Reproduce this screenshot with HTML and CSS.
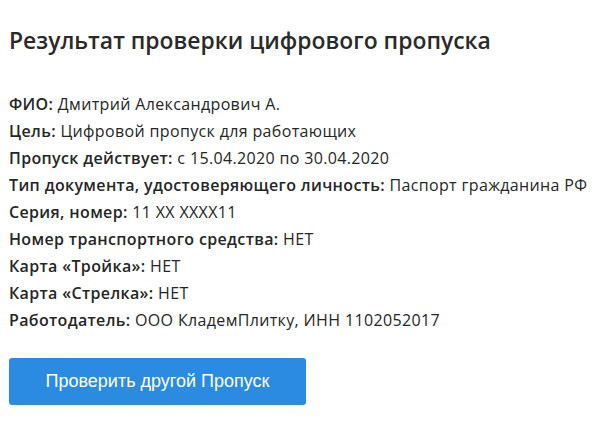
FILE: index.html
```html
<!DOCTYPE html>
<html lang="ru">
<head>
    <meta charset="UTF-8">
    <title>Результат проверки цифрового пропуска</title>
    <link rel="stylesheet" href="styles.css">
</head>
<body>
    <div class="result">
        <h2 class="title">Результат проверки цифрового пропуска</h2>

        <div class="fields">
            <p class="field"><b>ФИО:</b> Дмитрий Александрович А.</p>
            <p class="field"><b>Цель:</b> Цифровой пропуск для работающих</p>
            <p class="field"><b>Пропуск действует:</b> с 15.04.2020 по 30.04.2020</p>
            <p class="field"><b>Тип документа, удостоверяющего личность:</b> Паспорт гражданина РФ</p>
            <p class="field"><b>Серия, номер:</b> 11 XX XXXX11</p>
            <p class="field"><b>Номер транспортного средства:</b> НЕТ</p>
            <p class="field"><b>Карта «Тройка»:</b> НЕТ</p>
            <p class="field"><b>Карта «Стрелка»:</b> НЕТ</p>
            <p class="field"><b>Работодатель:</b> ООО КладемПлитку, ИНН 1102052017</p>
        </div>

        <button class="btn">Проверить другой Пропуск</button>
    </div>
</body>
</html>
```

FILE: styles.css
```css
body {
    margin: 0;
    background: #fff;
    font-family: "Open Sans", "DejaVu Sans", sans-serif;
    color: #262626;
}

.result {
    padding: 25px 9px 0 9px;
}

.title {
    margin: 0 0 34px 0;
    font-size: 22.9px;
    font-weight: 600;
    line-height: 32px;
    color: #2a2a2a;
}

.fields {
    margin-bottom: 24px;
}

.field {
    margin: 0;
    font-size: 16px;
    letter-spacing: 0.35px;
    line-height: 27px;
}

.field b {
    font-weight: 600;
}

.btn {
    display: block;
    width: 297px;
    height: 47px;
    border: none;
    border-radius: 3px;
    background: #2b8be0;
    color: #fff;
    font-family: "Liberation Sans", Arial, sans-serif;
    font-size: 18px;
    cursor: pointer;
}
```
